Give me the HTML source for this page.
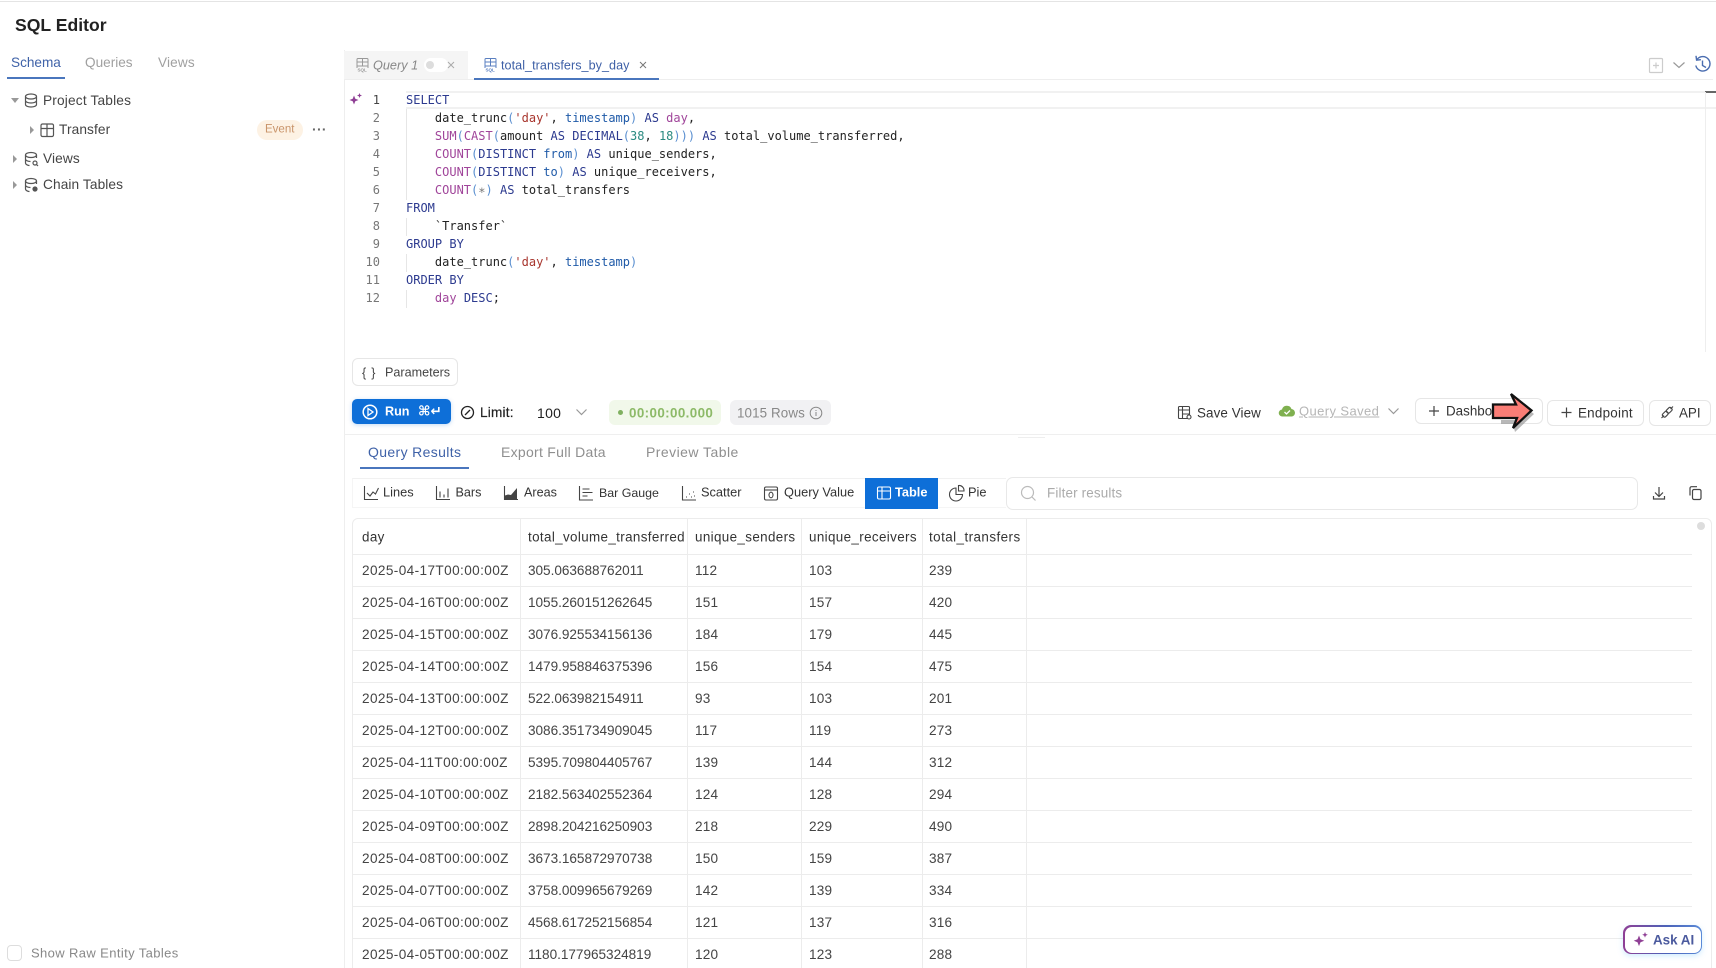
<!DOCTYPE html>
<html><head><meta charset="utf-8"><style>
*{box-sizing:border-box}
html,body{margin:0;padding:0;width:1716px;height:968px;overflow:hidden;background:#fff}
body{font-family:"Liberation Sans",sans-serif;color:#333;position:relative;filter:blur(.3px)}
.t{position:absolute;white-space:nowrap;line-height:1;transform:translateY(-50%)}
.b{position:absolute}
svg{position:absolute;overflow:visible;fill:none}
.m{position:absolute;left:406px;font-family:"DejaVu Sans Mono","Liberation Mono",monospace;font-size:12px;line-height:18px;white-space:pre;color:#222}
.n{position:absolute;width:30px;left:350px;text-align:right;font-family:"DejaVu Sans Mono","Liberation Mono",monospace;font-size:12px;line-height:18px;color:#777}
.k{color:#2c3a8f}.f{color:#a0459a}.s{color:#a8362e}.i{color:#1f5aa8}.u{color:#2a8a80}.p{color:#5a8fd0}.g{color:#777}
.h{font-size:13.4px;color:#333;letter-spacing:.37px;margin-top:-.5px}
.c{font-size:13.6px;color:#444;letter-spacing:.17px;margin-top:.7px}
.c[style*="left:362"]{letter-spacing:.39px}
.c[style*="left:528"]{letter-spacing:-.03px}
.hl{position:absolute;left:352px;width:1340px;height:1px;background:#ececec}
.vl{position:absolute;top:518px;width:1px;height:450px;background:#ececec}
.btn{position:absolute;border:1px solid #e6e6e6;border-radius:6px;background:#fff}
</style></head><body>
<div class="b" style="left:0;top:1px;width:1716px;height:1px;background:#e4e4e4"></div>
<div class="t" style="left:15px;top:26px;font-size:17.6px;font-weight:bold;color:#222">SQL Editor</div>

<div class="t" style="left:11px;top:63px;font-size:13.6px;color:#3f62a8">Schema</div>
<div class="b" style="left:7px;top:77px;width:58px;height:2px;background:#4a76bd"></div>
<div class="t" style="left:85px;top:63px;font-size:13.6px;color:#a0a0a0">Queries</div>
<div class="t" style="left:158px;top:63px;font-size:13.6px;color:#a0a0a0;letter-spacing:.15px">Views</div>

<svg style="left:0;top:0" width="344" height="200" stroke="#555" stroke-width="1.2">
<path d="M11 98h8l-4 5z" fill="#999" stroke="none"/>
<ellipse cx="31" cy="96.5" rx="5.5" ry="2.5"/><path d="M25.500 96.500v8c0 1.500 2.500 2.500 5.500 2.500s5.500-1 5.500-2.500v-8M25.500 100.500c0 1.500 2.500 2.500 5.500 2.500s5.500-1 5.500-2.500"/>
<path d="M30 126l4 4-4 4z" fill="#999" stroke="none"/>
<rect x="41" y="124" width="12.500" height="12.500" rx="1.500"/><path d="M41 128.500h12.500M47 124v12.500"/>
<path d="M13 155l4 4-4 4zM13 181l4 4-4 4z" fill="#999" stroke="none"/>
<ellipse cx="31" cy="155" rx="5.500" ry="2.500"/><path d="M25.500 155v8c0 1.500 2.500 2.500 4 2.500M36.500 155v3M25.500 159c0 1.500 2.500 2.500 5 2.500"/><circle cx="35" cy="163" r="2"/><path d="M36.500 164.500l1.500 1.500"/>
<ellipse cx="31" cy="181" rx="5.500" ry="2.500"/><path d="M25.500 181v8c0 1.500 2.500 2.500 4 2.500M36.500 181v3M25.500 185c0 1.500 2.500 2.500 5 2.500"/><circle cx="35" cy="189" r="2" fill="#555"/>
</svg>
<div class="t" style="left:43px;top:101px;font-size:13.700px;color:#444;letter-spacing:.17px">Project Tables</div>
<div class="t" style="left:59px;top:130px;font-size:13.700px;color:#444;letter-spacing:.1px">Transfer</div>
<div class="b" style="left:257px;top:120px;width:46px;height:20px;border-radius:10px;background:#fdf2e4"></div>
<div class="t" style="left:265px;top:130px;font-size:11.500px;color:#c9946a">Event</div>
<div class="t" style="left:312px;top:129px;font-size:14px;color:#666;font-weight:bold;letter-spacing:.3px">···</div>
<div class="t" style="left:43px;top:159px;font-size:13.700px;color:#444;letter-spacing:.1px">Views</div>
<div class="t" style="left:43px;top:185px;font-size:13.700px;color:#444;letter-spacing:.1px">Chain Tables</div>

<div class="b" style="left:7px;top:945px;width:15px;height:16px;border:1px solid #ddd;border-radius:4px"></div>
<div class="t" style="left:31px;top:953px;font-size:13px;color:#888;letter-spacing:.38px">Show Raw Entity Tables</div>

<div class="b" style="left:344px;top:50px;width:1px;height:918px;background:#eee"></div>

<!-- tabs -->
<div class="b" style="left:344px;top:51px;width:124px;height:28px;background:#f5f5f5"></div>
<div class="b" style="left:424px;top:58px;width:24px;height:14px;background:#fff;border-radius:7px"></div>
<div class="b" style="left:426px;top:61px;width:8px;height:8px;background:#ddd;border-radius:50%"></div>
<div class="b" style="left:344px;top:79px;width:1369px;height:1px;background:#eee"></div>
<div class="b" style="left:474px;top:78px;width:185px;height:2px;background:#4a76bd"></div>
<svg style="left:0;top:0" width="700" height="90" stroke-width="1">
<g stroke="#999"><path d="M357 68v-8.500a1 1 0 0 1 1-1h9a1 1 0 0 1 1 1V68M357 62h11M362.500 58.500V66M357 66h11"/></g>
<text x="357.500" y="71.500" font-size="4.500" font-weight="bold" fill="#999" font-family="Liberation Sans" stroke="none">SQL</text>
<path d="M448 62l6 6M454 62l-6 6" stroke="#aaa"/>
<g stroke="#5a7fc0"><path d="M485 68v-8.500a1 1 0 0 1 1-1h9a1 1 0 0 1 1 1V68M485 62h11M490.500 58.500V66M485 66h11"/></g>
<text x="485.500" y="71.500" font-size="4.500" font-weight="bold" fill="#5a7fc0" font-family="Liberation Sans" stroke="none">SQL</text>
<path d="M640 62l6 6M646 62l-6 6" stroke="#777"/>
</svg>
<div class="t" style="left:373px;top:65.500px;font-size:12.700px;font-style:italic;color:#888">Query 1</div>
<div class="t" style="left:501px;top:65.500px;font-size:12.600px;color:#3d5fa6;letter-spacing:.05px">total_transfers_by_day</div>
<svg style="left:1640px;top:50px" width="76" height="30" stroke-width="1.200">
<rect x="9.500" y="8.500" width="13" height="14" rx="1" stroke="#ccc"/><path d="M16 12.500v6M13 15.500h6" stroke="#ccc"/>
<path d="M33.500 12.500l5.500 5 5.500-5" stroke="#999"/>
<path d="M57 9.500a7.200 7.200 0 1 1-1.200 6" stroke="#4a6db0" stroke-width="1.400"/><path d="M56 5.800l.6 4.300 4.300-.4" stroke="#4a6db0" stroke-width="1.400"/><path d="M62.500 10.500v5l3.500 2" stroke="#4a6db0" stroke-width="1.400"/>
</svg>

<!-- editor -->
<div class="b" style="left:406px;top:91px;width:1310px;height:18px;border-top:2px solid #f1f1f1;border-bottom:2px solid #f1f1f1"></div>
<div class="b" style="left:1705px;top:91px;width:11px;height:2px;background:#666"></div>
<div class="b" style="left:1705px;top:92px;width:1px;height:260px;background:#eee"></div>
<div class="b" style="left:406px;top:109px;width:1px;height:91px;background:#e6e6e6"></div>
<div class="b" style="left:406px;top:218px;width:1px;height:18px;background:#e6e6e6"></div>
<div class="b" style="left:406px;top:254px;width:1px;height:18px;background:#e6e6e6"></div>
<div class="b" style="left:406px;top:290px;width:1px;height:18px;background:#e6e6e6"></div>
<svg style="left:348px;top:92px" width="16" height="16"><path d="M6 3.500l1.300 3.200 3.200 1.300-3.200 1.300L6 12.500 4.700 9.300 1.500 8l3.200-1.300z" fill="#8f3f95"/><path d="M11.500 1l.7 1.800 1.800.7-1.800.7-.7 1.800-.7-1.800L9 3.500l1.800-.7z" fill="#8f3f95"/></svg>
<div class="n" style="top:91px;color:#444">1</div><div class="n" style="top:109px">2</div><div class="n" style="top:127px">3</div><div class="n" style="top:145px">4</div><div class="n" style="top:163px">5</div><div class="n" style="top:181px">6</div><div class="n" style="top:199px">7</div><div class="n" style="top:217px">8</div><div class="n" style="top:235px">9</div><div class="n" style="top:253px">10</div><div class="n" style="top:271px">11</div><div class="n" style="top:289px">12</div>
<div class="m" style="top:91px"><span class="k">SELECT</span></div>
<div class="m" style="top:109px">    date_trunc<span class="p">(</span><span class="s">'day'</span>, <span class="i">timestamp</span><span class="p">)</span> <span class="k">AS</span> <span class="f">day</span>,</div>
<div class="m" style="top:127px">    <span class="f">SUM</span><span class="p">(</span><span class="f">CAST</span><span class="p">(</span>amount <span class="k">AS DECIMAL</span><span class="p">(</span><span class="u">38</span>, <span class="u">18</span><span class="p">)))</span> <span class="k">AS</span> total_volume_transferred,</div>
<div class="m" style="top:145px">    <span class="f">COUNT</span><span class="p">(</span><span class="k">DISTINCT</span> <span class="i">from</span><span class="p">)</span> <span class="k">AS</span> unique_senders,</div>
<div class="m" style="top:163px">    <span class="f">COUNT</span><span class="p">(</span><span class="k">DISTINCT</span> <span class="i">to</span><span class="p">)</span> <span class="k">AS</span> unique_receivers,</div>
<div class="m" style="top:181px">    <span class="f">COUNT</span><span class="p">(</span><span class="g">∗</span><span class="p">)</span> <span class="k">AS</span> total_transfers</div>
<div class="m" style="top:199px"><span class="k">FROM</span></div>
<div class="m" style="top:217px">    `Transfer`</div>
<div class="m" style="top:235px"><span class="k">GROUP BY</span></div>
<div class="m" style="top:253px">    date_trunc<span class="p">(</span><span class="s">'day'</span>, <span class="i">timestamp</span><span class="p">)</span></div>
<div class="m" style="top:271px"><span class="k">ORDER BY</span></div>
<div class="m" style="top:289px">    <span class="f">day</span> <span class="k">DESC</span>;</div>

<!-- parameters -->
<div class="btn" style="left:352px;top:358px;width:106px;height:28px"></div>
<div class="t" style="left:362px;top:372.500px;font-size:12.500px;color:#444;letter-spacing:.8px">{ }</div>
<div class="t" style="left:385px;top:372.500px;font-size:12.600px;color:#444">Parameters</div>

<!-- run row -->
<div class="b" style="left:352px;top:399px;width:99px;height:25px;border-radius:5px;background:#0e6fd8;box-shadow:0 1px 4px rgba(14,111,216,.25)"></div>
<svg style="left:0;top:395px" width="520" height="34" stroke-width="1.500">
<circle cx="370" cy="17" r="6.800" stroke="#fff"/><path d="M368 13.500l5 3.500-5 3.500z" stroke="#fff" stroke-width="1.300"/>
<circle cx="467.500" cy="17.500" r="6" stroke="#222" stroke-width="1.300"/><path d="M465 20l5-5" stroke="#222" stroke-width="1.300"/>
</svg>
<div class="t" style="left:385px;top:411.500px;font-size:12.600px;font-weight:bold;color:#fff">Run</div>
<div class="t" style="left:418px;top:411.500px;font-size:13.500px;font-weight:bold;color:#fff;font-family:'DejaVu Sans',sans-serif">⌘↵</div>
<div class="t" style="left:480px;top:412.500px;font-size:13.600px;color:#222;letter-spacing:.2px;-webkit-text-stroke:.2px #222">Limit:</div>
<div class="t" style="left:537px;top:412.500px;font-size:14px;color:#222;letter-spacing:.3px">100</div>
<svg style="left:575px;top:408px" width="14" height="10" stroke="#999" stroke-width="1.200"><path d="M1.500 1.500l5 5 5-5"/></svg>
<div class="b" style="left:609px;top:400px;width:112px;height:25px;border-radius:6px;background:#f1f8ea"></div>
<div class="b" style="left:618px;top:410px;width:5px;height:5px;border-radius:50%;background:#7fb060"></div>
<div class="t" style="left:629px;top:412.500px;font-size:13.400px;font-weight:bold;color:#8dba68;letter-spacing:.38px">00:00:00.000</div>
<div class="b" style="left:730px;top:400px;width:101px;height:25px;border-radius:6px;background:#f1f1f3"></div>
<div class="t" style="left:737px;top:412.500px;font-size:13.400px;color:#888;letter-spacing:.1px">1015 Rows</div>
<svg style="left:809px;top:406px" width="14" height="14" stroke="#888" stroke-width="1"><circle cx="7" cy="7" r="5.800"/><path d="M7 6v4M7 4v1"/></svg>

<!-- right actions -->
<svg style="left:1175px;top:404px" width="20" height="18" stroke="#444" stroke-width="1.100"><rect x="3.500" y="2.500" width="11" height="12" rx="1"/><path d="M3.500 6h11M7.500 2.500v12M7.500 10h7"/><circle cx="14" cy="13" r="2" fill="#fff"/></svg>
<div class="t" style="left:1197px;top:412.500px;font-size:13.400px;color:#333;letter-spacing:.1px">Save View</div>
<svg style="left:1278px;top:403px" width="18" height="16"><path d="M4.500 13.500a3.500 3.500 0 0 1-.5-7 5 5 0 0 1 9.500-.5 3.800 3.800 0 0 1 .5 7.500z" fill="#7fb04f"/><path d="M6.500 9l2 2 3.500-3.500" stroke="#fff" stroke-width="1.300"/></svg>
<div class="t" style="left:1299px;top:411px;font-size:13px;color:#b5b5b5;text-decoration:underline;letter-spacing:.4px">Query Saved</div>
<svg style="left:1387px;top:407px" width="14" height="10" stroke="#999" stroke-width="1.200"><path d="M1.500 1.500l5 5 5-5"/></svg>

<div class="btn" style="left:1415px;top:398px;width:128px;height:26px"></div>
<div class="t" style="left:1446px;top:411px;font-size:13.400px;color:#333">Dashboard</div>
<div class="btn" style="left:1547px;top:400px;width:97px;height:26px"></div>
<div class="t" style="left:1578px;top:412.500px;font-size:13.400px;color:#333;letter-spacing:.25px">Endpoint</div>
<div class="btn" style="left:1649px;top:400px;width:62px;height:26px"></div>
<div class="t" style="left:1679px;top:412.500px;font-size:13.400px;color:#333">API</div>
<svg style="left:1425px;top:400px" width="290" height="26" stroke="#444" stroke-width="1.200">
<path d="M4 11h10M9 6v10M136.500 12.500h10M141.500 7.500v10"/>
<g stroke-width="1.100"><path d="M236.500 18l2.500-2.500M245.500 9l2.500-2.500"/><rect x="-2" y="-3" width="4" height="6" rx="1.500" transform="translate(240.300 14.200) rotate(45)"/><rect x="-2" y="-3" width="4" height="6" rx="1.500" transform="translate(244.200 10.300) rotate(45)"/></g>
</svg>
<svg style="left:1485px;top:385px" width="60" height="55">
<path d="M30 14l19 15-19 18-2-8h-12v-4h14l-2-10z" fill="#9a9a9a" opacity=".7"/>
<path d="M8 19.500H31L26 9 46.500 25.500 28 43 32 33H8Z" fill="#fa7d76" stroke="#111" stroke-width="2.300" stroke-linejoin="miter"/>
</svg>

<div class="b" style="left:344px;top:434px;width:1372px;height:1px;background:#efefef"></div>
<div class="b" style="left:1018px;top:437px;width:27px;height:1px;background:#eee"></div>

<!-- result tabs -->
<div class="t" style="left:368px;top:451.500px;font-size:14px;color:#3f62a8;letter-spacing:.36px">Query Results</div>
<div class="b" style="left:360px;top:467px;width:109px;height:2px;background:#4a76bd"></div>
<div class="t" style="left:501px;top:451.500px;font-size:14px;color:#8f8f8f;letter-spacing:.28px">Export Full Data</div>
<div class="t" style="left:646px;top:451.500px;font-size:14px;color:#8f8f8f;letter-spacing:.45px">Preview Table</div>

<!-- chart toolbar -->
<div class="b" style="left:352px;top:478px;width:654px;height:30px;border-top:1px solid #f1f1f1;border-bottom:1px solid #f5f5f5;border-left:1px solid #f5f5f5"></div>
<div class="b" style="left:865px;top:478px;width:73px;height:31px;background:#0e6fd8"></div>
<svg style="left:350px;top:480px" width="640" height="26" stroke="#444" stroke-width="1.100">
<path d="M14.500 6v13.500h13.500M17 13l3 3 3-4 2.500 2 3-6"/>
<path d="M86.500 6v13.500h13.500M90 11.500v6M94 14.500v3M98 8.500v9"/>
<path d="M154.500 6v13.500h13.500"/><path d="M155 19v-3.500l3-1 3 .5 3-3.500 3-3.500v11z" fill="#444" stroke="none"/>
<path d="M229.500 6v14h13.500M232.500 9h7M232.500 12.500h10M232.500 16h5"/>
<path d="M332.500 6v14h13.500"/><path d="M336 17h1M339 14h1M343 12h1M341 17h1M344 16h1" stroke-dasharray="1 1"/>
<rect x="414.500" y="7" width="13" height="13" rx="1.500"/><path d="M414.500 10h13"/><ellipse cx="421" cy="15" rx="2" ry="2.800"/>
<g stroke="#fff"><rect x="527.500" y="7" width="13" height="12" rx="1.500"/><path d="M527.500 11h13M532 7v12"/></g>
<path d="M606 8a6.500 6.500 0 1 0 6.500 6.500H606zM608.500 5.500a5 5 0 0 1 5.500 5.500h-5.500z"/>
</svg>
<div class="t" style="left:383px;top:493px;font-size:12.800px;color:#333">Lines</div>
<div class="t" style="left:455.500px;top:493px;font-size:12.600px;color:#333">Bars</div>
<div class="t" style="left:524px;top:493px;font-size:12.600px;color:#333">Areas</div>
<div class="t" style="left:599px;top:493px;font-size:12.400px;color:#333">Bar Gauge</div>
<div class="t" style="left:701px;top:493px;font-size:12.800px;color:#333">Scatter</div>
<div class="t" style="left:784px;top:493px;font-size:12.800px;color:#333">Query Value</div>
<div class="t" style="left:895px;top:493px;font-size:12.800px;font-weight:bold;color:#fff">Table</div>
<div class="t" style="left:968px;top:493px;font-size:12.800px;color:#333">Pie</div>

<div class="b" style="left:1006px;top:477px;width:632px;height:33px;border:1px solid #e8e8e8;border-radius:7px"></div>
<svg style="left:1020px;top:485px" width="18" height="18" stroke="#bbb" stroke-width="1.200"><circle cx="7.500" cy="7.500" r="6"/><path d="M12 12l3.500 3.500"/></svg>
<div class="t" style="left:1047px;top:493px;font-size:13.400px;color:#aaa;letter-spacing:.17px">Filter results</div>
<svg style="left:1650px;top:484px" width="56" height="18" stroke="#444" stroke-width="1.200">
<path d="M9 3v9M5 8.500l4 4 4-4M3.500 12v3h11v-3"/>
<rect x="42.500" y="5.500" width="8.500" height="10" rx="1.500"/><path d="M40 11.500V4.200a1.500 1.500 0 0 1 1.500-1.500h5.500"/>
</svg>

<!-- table -->
<div class="b" style="left:352px;top:518px;width:1360px;height:460px;border:1px solid #ececec;border-radius:6px"></div>
<div class="vl" style="left:520px"></div><div class="vl" style="left:687px"></div><div class="vl" style="left:801px"></div><div class="vl" style="left:922px"></div><div class="vl" style="left:1026px"></div>
<div class="b" style="left:1697px;top:522px;width:8px;height:8px;border-radius:50%;background:#ddd"></div>
<div class="hl" style="top:554px"></div><div class="hl" style="top:586px"></div><div class="hl" style="top:618px"></div><div class="hl" style="top:650px"></div><div class="hl" style="top:682px"></div><div class="hl" style="top:714px"></div><div class="hl" style="top:746px"></div><div class="hl" style="top:778px"></div><div class="hl" style="top:810px"></div><div class="hl" style="top:842px"></div><div class="hl" style="top:874px"></div><div class="hl" style="top:906px"></div><div class="hl" style="top:938px"></div>

<div class="t h" style="left:362px;top:537px">day</div>
<div class="t h" style="left:528px;top:537px">total_volume_transferred</div>
<div class="t h" style="left:695px;top:537px">unique_senders</div>
<div class="t h" style="left:809px;top:537px">unique_receivers</div>
<div class="t h" style="left:929px;top:537px;letter-spacing:.45px">total_transfers</div>

<div class="t c" style="left:362px;top:570px">2025-04-17T00:00:00Z</div><div class="t c" style="left:528px;top:570px">305.063688762011</div><div class="t c" style="left:695px;top:570px">112</div><div class="t c" style="left:809px;top:570px">103</div><div class="t c" style="left:929px;top:570px">239</div>
<div class="t c" style="left:362px;top:602px">2025-04-16T00:00:00Z</div><div class="t c" style="left:528px;top:602px">1055.260151262645</div><div class="t c" style="left:695px;top:602px">151</div><div class="t c" style="left:809px;top:602px">157</div><div class="t c" style="left:929px;top:602px">420</div>
<div class="t c" style="left:362px;top:634px">2025-04-15T00:00:00Z</div><div class="t c" style="left:528px;top:634px">3076.925534156136</div><div class="t c" style="left:695px;top:634px">184</div><div class="t c" style="left:809px;top:634px">179</div><div class="t c" style="left:929px;top:634px">445</div>
<div class="t c" style="left:362px;top:666px">2025-04-14T00:00:00Z</div><div class="t c" style="left:528px;top:666px">1479.958846375396</div><div class="t c" style="left:695px;top:666px">156</div><div class="t c" style="left:809px;top:666px">154</div><div class="t c" style="left:929px;top:666px">475</div>
<div class="t c" style="left:362px;top:698px">2025-04-13T00:00:00Z</div><div class="t c" style="left:528px;top:698px">522.063982154911</div><div class="t c" style="left:695px;top:698px">93</div><div class="t c" style="left:809px;top:698px">103</div><div class="t c" style="left:929px;top:698px">201</div>
<div class="t c" style="left:362px;top:730px">2025-04-12T00:00:00Z</div><div class="t c" style="left:528px;top:730px">3086.351734909045</div><div class="t c" style="left:695px;top:730px">117</div><div class="t c" style="left:809px;top:730px">119</div><div class="t c" style="left:929px;top:730px">273</div>
<div class="t c" style="left:362px;top:762px">2025-04-11T00:00:00Z</div><div class="t c" style="left:528px;top:762px">5395.709804405767</div><div class="t c" style="left:695px;top:762px">139</div><div class="t c" style="left:809px;top:762px">144</div><div class="t c" style="left:929px;top:762px">312</div>
<div class="t c" style="left:362px;top:794px">2025-04-10T00:00:00Z</div><div class="t c" style="left:528px;top:794px">2182.563402552364</div><div class="t c" style="left:695px;top:794px">124</div><div class="t c" style="left:809px;top:794px">128</div><div class="t c" style="left:929px;top:794px">294</div>
<div class="t c" style="left:362px;top:826px">2025-04-09T00:00:00Z</div><div class="t c" style="left:528px;top:826px">2898.204216250903</div><div class="t c" style="left:695px;top:826px">218</div><div class="t c" style="left:809px;top:826px">229</div><div class="t c" style="left:929px;top:826px">490</div>
<div class="t c" style="left:362px;top:858px">2025-04-08T00:00:00Z</div><div class="t c" style="left:528px;top:858px">3673.165872970738</div><div class="t c" style="left:695px;top:858px">150</div><div class="t c" style="left:809px;top:858px">159</div><div class="t c" style="left:929px;top:858px">387</div>
<div class="t c" style="left:362px;top:890px">2025-04-07T00:00:00Z</div><div class="t c" style="left:528px;top:890px">3758.009965679269</div><div class="t c" style="left:695px;top:890px">142</div><div class="t c" style="left:809px;top:890px">139</div><div class="t c" style="left:929px;top:890px">334</div>
<div class="t c" style="left:362px;top:922px">2025-04-06T00:00:00Z</div><div class="t c" style="left:528px;top:922px">4568.617252156854</div><div class="t c" style="left:695px;top:922px">121</div><div class="t c" style="left:809px;top:922px">137</div><div class="t c" style="left:929px;top:922px">316</div>
<div class="t c" style="left:362px;top:954px">2025-04-05T00:00:00Z</div><div class="t c" style="left:528px;top:954px">1180.177965324819</div><div class="t c" style="left:695px;top:954px">120</div><div class="t c" style="left:809px;top:954px">123</div><div class="t c" style="left:929px;top:954px">288</div>

<!-- ask AI -->
<div class="b" style="left:1623px;top:925px;width:79px;height:29px;border-radius:8px;background:linear-gradient(90deg,#8f3f95,#4b62b8 55%,#5a8ad8);box-shadow:0 2px 6px rgba(120,200,255,.35)"></div>
<div class="b" style="left:1624.500px;top:926.500px;width:76px;height:26px;border-radius:7px;background:#fff"></div>
<svg style="left:1632px;top:931px" width="18" height="18"><path d="M7 4.500l1.500 3.800 3.800 1.500-3.800 1.500L7 15.100l-1.500-3.800L1.700 9.800l3.800-1.500z" fill="#8f3f95"/><path d="M13 1l.8 2 2 .8-2 .8-.8 2-.8-2-2-.8 2-.8z" fill="#8f3f95"/></svg>
<div class="t" style="left:1653px;top:940px;font-size:13.400px;font-weight:bold;color:#4b5a9e">Ask AI</div>
</body></html>
